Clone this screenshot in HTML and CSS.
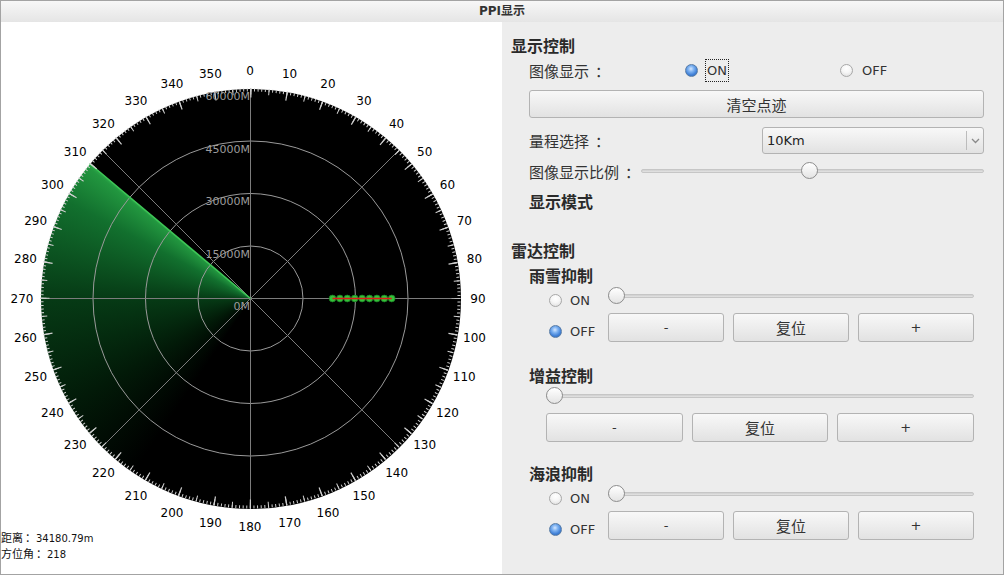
FILE: index.html
```html
<!DOCTYPE html>
<html lang="zh-CN">
<head>
<meta charset="utf-8">
<title>PPI显示</title>
<link rel="stylesheet" href="styles.css">
</head>
<body>
<div class="window">
  <div class="titlebar">PPI显示</div>
  <div class="content">
    <div class="radar-pane">
      <svg class="radar" width="501" height="552" viewBox="1 22 501 552" xmlns="http://www.w3.org/2000/svg">
        <foreignObject x="40.5" y="88.5" width="420" height="420">
          <div xmlns="http://www.w3.org/1999/xhtml" class="scope"></div>
        </foreignObject>
        <g class="rings">
          <circle cx="250.5" cy="298.5" r="52.5"/>
          <circle cx="250.5" cy="298.5" r="105"/>
          <circle cx="250.5" cy="298.5" r="157.5"/>
        </g>
        <g class="axes">
          <line x1="250.5" y1="88.5" x2="250.5" y2="508.5"/>
          <line x1="40.5" y1="298.5" x2="460.5" y2="298.5"/>
          <line x1="102" y1="150" x2="399" y2="447"/>
          <line x1="399" y1="150" x2="102" y2="447"/>
        </g>
        <line class="sweep-edge" x1="250.5" y1="298.5" x2="89.6" y2="163.5"/>
        <g class="ticks">
          <circle class="t1" cx="250.5" cy="298.5" r="208.5"/>
          <circle class="t5" cx="250.5" cy="298.5" r="207"/>
          <circle class="t10" cx="250.5" cy="298.5" r="205.5"/>
        </g>
        <g class="rng">
          <text x="250" y="310">0M</text>
          <text x="250" y="257.5">15000M</text>
          <text x="250" y="205">30000M</text>
          <text x="250" y="152.5">45000M</text>
          <text x="250" y="100">60000M</text>
        </g>
        <g class="deg">
          <text x="250" y="74.5">0</text>
          <text x="289.6" y="78">10</text>
          <text x="328" y="88.3">20</text>
          <text x="364" y="105.1">30</text>
          <text x="396.6" y="127.8">40</text>
          <text x="424.7" y="155.9">50</text>
          <text x="447.5" y="188.5">60</text>
          <text x="464.3" y="224.5">70</text>
          <text x="474.5" y="262.9">80</text>
          <text x="478" y="302.5">90</text>
          <text x="474.5" y="342.1">100</text>
          <text x="464.3" y="380.5">110</text>
          <text x="447.5" y="416.5">120</text>
          <text x="424.7" y="449.2">130</text>
          <text x="396.6" y="477.2">140</text>
          <text x="364" y="500">150</text>
          <text x="328" y="516.8">160</text>
          <text x="289.6" y="527">170</text>
          <text x="250" y="530.5">180</text>
          <text x="210.4" y="527">190</text>
          <text x="172" y="516.8">200</text>
          <text x="136" y="500">210</text>
          <text x="103.4" y="477.2">220</text>
          <text x="75.3" y="449.2">230</text>
          <text x="52.5" y="416.5">240</text>
          <text x="35.7" y="380.5">250</text>
          <text x="25.5" y="342.1">260</text>
          <text x="22" y="302.5">270</text>
          <text x="25.5" y="262.9">280</text>
          <text x="35.7" y="224.5">290</text>
          <text x="52.5" y="188.5">300</text>
          <text x="75.3" y="155.9">310</text>
          <text x="103.4" y="127.8">320</text>
          <text x="136" y="105.1">330</text>
          <text x="172" y="88.3">340</text>
          <text x="210.4" y="78">350</text>
        </g>
        <g class="target">
          <circle cx="332.5" cy="298.5" r="3.4"/>
          <circle cx="339.9" cy="298.5" r="3.4"/>
          <circle cx="347.3" cy="298.5" r="3.4"/>
          <circle cx="354.7" cy="298.5" r="3.4"/>
          <circle cx="362.1" cy="298.5" r="3.4"/>
          <circle cx="369.5" cy="298.5" r="3.4"/>
          <circle cx="376.9" cy="298.5" r="3.4"/>
          <circle cx="384.3" cy="298.5" r="3.4"/>
          <circle cx="391.7" cy="298.5" r="3.4"/>
          <line class="track" x1="332.5" y1="298.5" x2="391.7" y2="298.5"/>
        </g>
        <text class="info" x="1" y="542"><tspan class="info-cjk">距离</tspan><tspan class="info-cjk" dx="2">：</tspan>34180.79m</text>
        <text class="info" x="1" y="558"><tspan class="info-cjk">方位角</tspan><tspan class="info-cjk" dx="2">：</tspan>218</text>
      </svg>
    </div>
    <div class="ctrl-pane">
      <div class="sec-title">显示控制</div>
      <div class="row radio-row">
        <span class="lbl lbl-img">图像显示<span class="colon">：</span></span>
        <span class="opt opt-on"><span class="radio checked"></span><span class="latin focus">ON</span></span>
        <span class="opt opt-off"><span class="radio"></span><span class="latin">OFF</span></span>
      </div>
      <button class="btn btn-clear">清空点迹</button>
      <div class="row combo-row">
        <span class="lbl lbl-grow">量程选择<span class="colon">：</span></span>
        <div class="combo">
          <span class="latin combo-text">10Km</span>
          <span class="combo-arrow"><svg width="9" height="6" viewBox="0 0 9 6"><polyline points="1,1 4.5,4.5 8,1" fill="none" stroke="#8a8a8a" stroke-width="1.3"/></svg></span>
        </div>
      </div>
      <div class="row slider-row">
        <span class="lbl lbl-ratio">图像显示比例<span class="colon">：</span></span>
        <div class="slider"><div class="groove"></div><div class="handle" style="--v:0.49"></div></div>
      </div>
      <div class="sub-title mt-mode">显示模式</div>

      <div class="sec-title mt-radar">雷达控制</div>
      <div class="sub-title mt-rain">雨雪抑制</div>
      <div class="sup-group">
        <span class="sup-opt"><span class="radio"></span><span class="latin">ON</span></span>
        <div class="slider sup-slider"><div class="groove"></div><div class="handle" style="--v:0"></div></div>
        <span class="sup-opt sup-off"><span class="radio checked"></span><span class="latin">OFF</span></span>
        <div class="btn-row">
          <button class="btn"><span class="latin">-</span></button>
          <button class="btn">复位</button>
          <button class="btn"><span class="latin">+</span></button>
        </div>
      </div>

      <div class="sub-title mt-gain">增益控制</div>
      <div class="slider gain-slider"><div class="groove"></div><div class="handle" style="--v:0"></div></div>
      <div class="btn-row gain-btns">
        <button class="btn"><span class="latin">-</span></button>
        <button class="btn">复位</button>
        <button class="btn"><span class="latin">+</span></button>
      </div>

      <div class="sub-title mt-sea">海浪抑制</div>
      <div class="sup-group">
        <span class="sup-opt"><span class="radio"></span><span class="latin">ON</span></span>
        <div class="slider sup-slider"><div class="groove"></div><div class="handle" style="--v:0"></div></div>
        <span class="sup-opt sup-off"><span class="radio checked"></span><span class="latin">OFF</span></span>
        <div class="btn-row">
          <button class="btn"><span class="latin">-</span></button>
          <button class="btn">复位</button>
          <button class="btn"><span class="latin">+</span></button>
        </div>
      </div>
    </div>
  </div>
</div>
</body>
</html>
```

FILE: styles.css
```css
* { box-sizing: border-box; }
html, body { margin: 0; padding: 0; }
body {
  width: 1004px;
  height: 575px;
  overflow: hidden;
  background: #fff;
  font-family: "DejaVu Sans", "Noto Sans CJK SC", sans-serif;
}
.window {
  width: 1004px;
  height: 575px;
  border: 1px solid #a3a3a3;
  display: flex;
  flex-direction: column;
  background: #ededed;
}
.titlebar {
  height: 21px;
  flex: none;
  background: linear-gradient(#f7f7f7, #e5e5e5);
  text-align: center;
  font: bold 12px/21px "DejaVu Sans", "Noto Sans CJK SC", sans-serif;
  color: #333;
}
.content { flex: 1; display: flex; min-height: 0; }
.radar-pane { width: 501px; flex: none; background: #fff; }
.radar { display: block; }

/* radar drawing */
.scope {
  width: 420px;
  height: 420px;
  border-radius: 50%;
  background: conic-gradient(#000 0deg 214deg, #021a08 240deg, #063a15 270deg, #12702e 298deg, #22963f 309deg, #2aa848 310deg, #000 310.2deg 360deg);
}
.rings circle { fill: none; stroke: #9a9a9a; stroke-width: 1; }
.axes line { stroke: #7c7c7c; stroke-width: 1; }
.sweep-edge { stroke: #3ec456; stroke-width: 1.6; }
.ticks circle { fill: none; stroke: #cfcfcf; }
.ticks .t1 { stroke-width: 3; stroke-dasharray: 1 2.63901; stroke-dashoffset: 0.5; }
.ticks .t5 { stroke-width: 6; stroke-dasharray: 1 17.06416; stroke-dashoffset: 0.5; }
.ticks .t10 { stroke-width: 9; stroke-dasharray: 1.2 34.6665; stroke-dashoffset: 0.6; }
.rng text { font: 11px "DejaVu Sans", sans-serif; fill: #9c9c9c; text-anchor: end; }
.deg text { font: 12px "DejaVu Sans", sans-serif; fill: #000; text-anchor: middle; }
.target circle { fill: #33c23a; stroke: #1b7a22; stroke-width: 0.8; }
.target .track { stroke: #e01818; stroke-width: 1.6; }
.info { font: 10px "DejaVu Sans", sans-serif; fill: #111; }
.info-cjk { font-family: "Noto Sans CJK SC", sans-serif; font-size: 11px; }

/* control pane */
.ctrl-pane {
  flex: 1;
  padding: 13px 19px 0 9px;
  display: flex;
  flex-direction: column;
  color: #333;
  font-family: "Noto Sans CJK SC", sans-serif;
  font-size: 15px;
}
.colon { display: inline-block; padding-left: 6px; }
.sec-title, .sub-title {
  height: 20px;
  line-height: 20px;
  font-weight: bold;
  font-size: 16px;
  color: #2a2a2a;
  flex: none;
}
.sub-title { margin-left: 18px; }
.mt-mode { margin-top: 10px; }
.mt-radar { margin-top: 29px; }
.mt-rain { margin-top: 5px; }
.mt-gain { margin-top: 23px; }
.mt-sea { margin-top: 21px; }

.latin { font-family: "DejaVu Sans", sans-serif; font-size: 13px; }

.row { display: flex; align-items: center; margin-left: 18px; flex: none; }
.lbl { flex: none; white-space: nowrap; }
.radio-row { height: 24px; margin-top: 3px; }
.lbl-img { width: 156px; }
.opt { display: flex; align-items: center; }
.opt-on { width: 155px; gap: 7px; }
.opt-off { gap: 9px; }
.focus { border: 1px dotted #222; padding: 0 1px; line-height: 21px; }

.radio {
  width: 13px;
  height: 13px;
  flex: none;
  border-radius: 50%;
  border: 1px solid #a8a8a8;
  background: radial-gradient(circle at 50% 30%, #ffffff 0, #f6f6f6 45%, #dadada 100%);
}
.radio.checked {
  border-color: #587ca6;
  background: radial-gradient(circle at 45% 35%, #d4e6ff 0, #80b4f2 30%, #3f7fd6 65%, #2c62b0 100%);
}

.btn {
  font-family: "Noto Sans CJK SC", sans-serif;
  font-size: 15px;
  color: #333;
  border: 1px solid #b3b3b3;
  border-radius: 3px;
  background: linear-gradient(#f8f8f8, #e2e2e2);
  padding: 0;
  margin: 0;
  display: flex;
  align-items: center;
  justify-content: center;
}
.btn-clear { margin: 8px 0 0 18px; height: 28px; flex: none; align-self: stretch; }

.combo-row { margin-top: 9px; height: 27px; }
.lbl-grow { flex: 1; }
.combo {
  width: 222px;
  height: 27px;
  border: 1px solid #b3b3b3;
  border-radius: 3px;
  background: linear-gradient(#f8f8f8, #e2e2e2);
  display: flex;
  align-items: center;
}
.combo-text { flex: 1; padding-left: 4px; color: #222; }
.combo-arrow {
  width: 17px;
  height: 19px;
  border-left: 1px solid #bcbcbc;
  display: flex;
  align-items: center;
  justify-content: center;
}

.slider-row { margin-top: 7px; height: 20px; }
.lbl-ratio { width: 112px; }
.slider {
  flex: 1;
  height: 18px;
  position: relative;
  display: flex;
  align-items: center;
}
.groove {
  width: 100%;
  height: 4px;
  border-radius: 2px;
  background: linear-gradient(#cfcfcf, #e4e4e4);
  border: 1px solid #c6c6c6;
}
.handle {
  position: absolute;
  top: 0;
  left: calc(var(--v) * (100% - 17px));
  width: 17px;
  height: 17px;
  border-radius: 50%;
  border: 1px solid #8c8c8c;
  background: linear-gradient(#ffffff, #e4e4e4);
}

.sup-group {
  margin: 1px 10px 0 18px;
  display: grid;
  grid-template-columns: 79px 1fr;
  grid-template-rows: 22px 29px;
  row-gap: 5px;
  flex: none;
}
.sup-opt {
  display: flex;
  align-items: center;
  gap: 8px;
  padding-left: 20px;
  height: 16px;
  align-self: end;
}
.sup-off { margin-bottom: 3px; }
.sup-slider { align-self: start; margin-top: 1px; flex: none; }
.btn-row { display: flex; gap: 9px; }
.btn-row .btn { flex: 1; }

.gain-slider { margin: 2px 10px 0 35px; flex: none; }
.gain-btns { margin: 8px 10px 0 35px; height: 29px; flex: none; }
```
